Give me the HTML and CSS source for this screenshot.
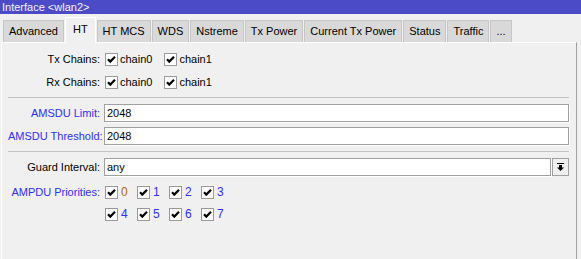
FILE: index.html
```html
<!DOCTYPE html>
<html>
<head>
<meta charset="utf-8">
<title>Interface &lt;wlan2&gt;</title>
<link rel="stylesheet" href="styles.css">
</head>
<body>
<div class="window">
  <div class="titlebar">Interface &lt;wlan2&gt;</div>
  <div class="tabs">
    <div class="tab">Advanced</div>
    <div class="tab active">HT</div>
    <div class="tab">HT MCS</div>
    <div class="tab">WDS</div>
    <div class="tab">Nstreme</div>
    <div class="tab">Tx Power</div>
    <div class="tab">Current Tx Power</div>
    <div class="tab">Status</div>
    <div class="tab">Traffic</div>
    <div class="tab">...</div>
  </div>
  <div class="panel">
    <div class="row first">
      <div class="label">Tx Chains:</div>
      <div class="field checks">
        <label class="check"><span class="box"><svg viewBox="0 0 11 11" width="11" height="11"><path d="M2 5.2 L4.3 7.6 L9 2.8" /></svg></span><span class="ctext">chain0</span></label>
        <label class="check"><span class="box"><svg viewBox="0 0 11 11" width="11" height="11"><path d="M2 5.2 L4.3 7.6 L9 2.8" /></svg></span><span class="ctext">chain1</span></label>
      </div>
    </div>
    <div class="row">
      <div class="label">Rx Chains:</div>
      <div class="field checks">
        <label class="check"><span class="box"><svg viewBox="0 0 11 11" width="11" height="11"><path d="M2 5.2 L4.3 7.6 L9 2.8" /></svg></span><span class="ctext">chain0</span></label>
        <label class="check"><span class="box"><svg viewBox="0 0 11 11" width="11" height="11"><path d="M2 5.2 L4.3 7.6 L9 2.8" /></svg></span><span class="ctext">chain1</span></label>
      </div>
    </div>
    <div class="sep"></div>
    <div class="row">
      <div class="label blue">AMSDU Limit:</div>
      <div class="field"><div class="input">2048</div></div>
    </div>
    <div class="row">
      <div class="label blue">AMSDU Threshold:</div>
      <div class="field"><div class="input">2048</div></div>
    </div>
    <div class="sep"></div>
    <div class="row">
      <div class="label">Guard Interval:</div>
      <div class="field">
        <div class="input grow">any</div>
        <div class="dropbtn"><svg viewBox="0 0 9 9" width="9" height="9"><rect x="1" y="0" width="7" height="1"/><rect x="3" y="2" width="3" height="3"/><polygon points="1,4.5 8,4.5 4.5,8"/></svg></div>
      </div>
    </div>
    <div class="row prio">
      <div class="label blue">AMPDU Priorities:</div>
      <div class="field pgrid">
        <label class="pcheck"><span class="box"><svg viewBox="0 0 11 11" width="11" height="11"><path d="M2 5.2 L4.3 7.6 L9 2.8" /></svg></span><span class="ptext orange">0</span></label>
        <label class="pcheck"><span class="box"><svg viewBox="0 0 11 11" width="11" height="11"><path d="M2 5.2 L4.3 7.6 L9 2.8" /></svg></span><span class="ptext">1</span></label>
        <label class="pcheck"><span class="box"><svg viewBox="0 0 11 11" width="11" height="11"><path d="M2 5.2 L4.3 7.6 L9 2.8" /></svg></span><span class="ptext">2</span></label>
        <label class="pcheck"><span class="box"><svg viewBox="0 0 11 11" width="11" height="11"><path d="M2 5.2 L4.3 7.6 L9 2.8" /></svg></span><span class="ptext">3</span></label>
        <label class="pcheck"><span class="box"><svg viewBox="0 0 11 11" width="11" height="11"><path d="M2 5.2 L4.3 7.6 L9 2.8" /></svg></span><span class="ptext">4</span></label>
        <label class="pcheck"><span class="box"><svg viewBox="0 0 11 11" width="11" height="11"><path d="M2 5.2 L4.3 7.6 L9 2.8" /></svg></span><span class="ptext">5</span></label>
        <label class="pcheck"><span class="box"><svg viewBox="0 0 11 11" width="11" height="11"><path d="M2 5.2 L4.3 7.6 L9 2.8" /></svg></span><span class="ptext">6</span></label>
        <label class="pcheck"><span class="box"><svg viewBox="0 0 11 11" width="11" height="11"><path d="M2 5.2 L4.3 7.6 L9 2.8" /></svg></span><span class="ptext">7</span></label>
      </div>
    </div>
  </div>
</div>
</body>
</html>
```
FILE: styles.css
```css
html, body {
  margin: 0;
  padding: 0;
  height: 100%;
}
body {
  background: #f0f0f0;
  font-family: "Liberation Sans", Arial, sans-serif;
  font-size: 11px;
  color: #000;
  overflow: hidden;
}
.window {
  display: flex;
  flex-direction: column;
  height: 100%;
}
.titlebar {
  height: 14px;
  line-height: 15px;
  background: #4b4bc8;
  color: #f4f4ff;
  font-size: 11px;
  padding-left: 2px;
  white-space: nowrap;
}
.tabs {
  display: flex;
  align-items: flex-end;
  height: 28px;
  padding-left: 3px;
  gap: 1px;
}
.tab {
  box-sizing: border-box;
  height: 22px;
  line-height: 21px;
  padding: 0 5px;
  background: #d9d9d9;
  border: 1px solid #c6c6c6;
  border-bottom: none;
  white-space: nowrap;
}
.tab.active {
  height: 26px;
  line-height: 22px;
  padding: 0 7px;
  background: #f0f0f0;
  border-color: #ffffff;
  margin-bottom: -1px;
  position: relative;
  z-index: 1;
}
.panel {
  flex: 1;
  margin-left: 1px;
  margin-right: 4px;
  border-top: 1px solid #ffffff;
  border-left: 1px solid #ffffff;
  border-right: 1px solid #a0a0a0;
  padding: 7px 7px 0 6px;
}
.row {
  display: flex;
  align-items: center;
  height: 18px;
  margin-top: 5px;
}
.row.first {
  margin-top: 0;
}
.label {
  width: 92px;
  text-align: right;
  padding-right: 4px;
  flex: none;
  white-space: nowrap;
}
.label.blue {
  color: #2f2ff5;
}
.field {
  flex: 1;
  display: flex;
  align-items: center;
  height: 100%;
}
.checks {
  gap: 11px;
}
.check {
  display: flex;
  align-items: center;
}
.box {
  box-sizing: border-box;
  width: 13px;
  height: 13px;
  background: #ffffff;
  border: 1px solid #9a9a9a;
  display: flex;
  align-items: center;
  justify-content: center;
  margin-left: 1px;
}
.box svg path {
  fill: none;
  stroke: #000;
  stroke-width: 2.2;
}
.ctext {
  margin-left: 2px;
}
.sep {
  height: 1px;
  background: #c3c3c3;
  margin: 6px 0;
}
.sep + .row {
  margin-top: 0;
}
.input {
  box-sizing: border-box;
  flex: 1;
  height: 18px;
  line-height: 16px;
  background: #ffffff;
  border: 1px solid #a0a0a0;
  box-shadow: 1px 1px 0 #ffffff;
  padding-left: 2px;
}
.dropbtn {
  box-sizing: border-box;
  width: 17px;
  height: 18px;
  margin-left: 1px;
  border: 1px solid #a0a0a0;
  background: #f0f0f0;
  display: flex;
  align-items: center;
  justify-content: center;
}
.dropbtn svg {
  fill: #000;
}
.row.prio {
  align-items: flex-start;
  height: auto;
  margin-top: 7px;
}
.row.prio .label {
  line-height: 18px;
}
.pgrid {
  display: grid;
  grid-template-columns: repeat(4, 32px);
  grid-auto-rows: 18px;
  row-gap: 4px;
  height: auto;
}
.pcheck {
  display: flex;
  align-items: center;
}
.ptext {
  margin-left: 3px;
  color: #2f2ff5;
  font-size: 12px;
}
.ptext.orange {
  color: #b0660c;
}
```
